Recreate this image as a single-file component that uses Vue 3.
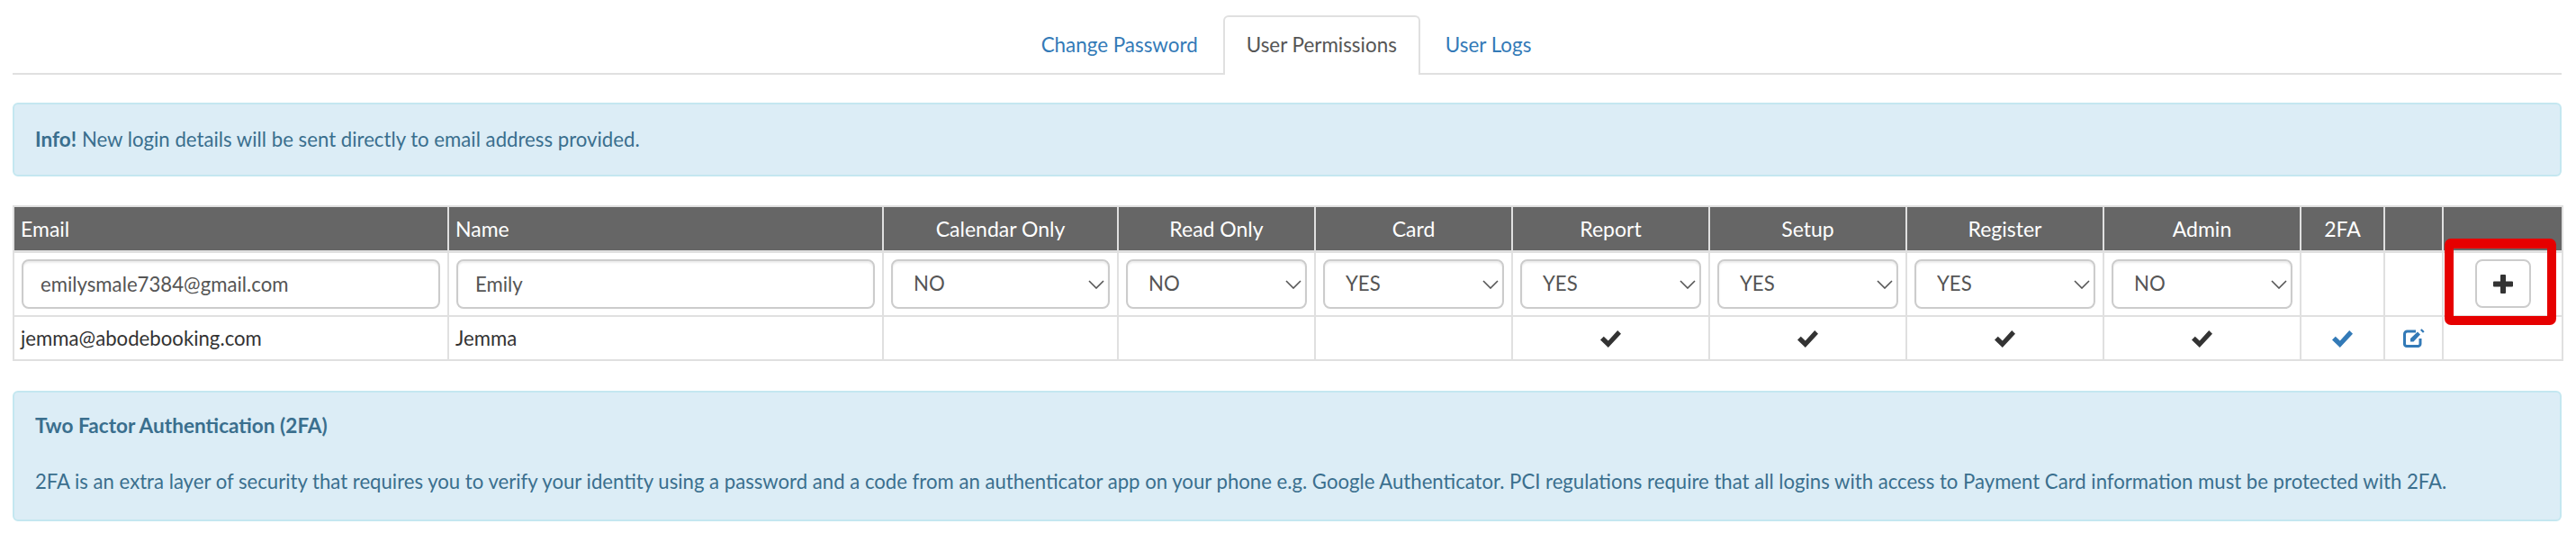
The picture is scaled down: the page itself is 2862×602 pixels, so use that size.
<script setup>
const columns = [
  { label: 'Email', cls: 'left', width: 483 },
  { label: 'Name', cls: 'left', width: 483 },
  { label: 'Calendar Only', width: 261 },
  { label: 'Read Only', width: 219 },
  { label: 'Card', width: 219 },
  { label: 'Report', width: 219 },
  { label: 'Setup', width: 219 },
  { label: 'Register', width: 219 },
  { label: 'Admin', width: 219 },
  { label: '2FA', width: 93 },
  { label: '', width: 65 },
  { label: '', width: 133 },
]
const selects = ['NO', 'NO', 'YES', 'YES', 'YES', 'YES', 'NO']
const checked = [false, false, false, true, true, true, true]
</script>

<template>
  <div class="page">
    <ul class="tabs">
      <li><a class="tab">Change Password</a></li>
      <li><a class="tab active">User Permissions</a></li>
      <li><a class="tab">User Logs</a></li>
    </ul>

    <div class="alert first"><strong>Info!</strong> New login details will be sent directly to email address provided.</div>

    <table class="grid">
      <colgroup>
        <col v-for="(c, i) in columns" :key="i" :style="{ width: c.width + 'px' }" />
      </colgroup>
      <thead>
        <tr>
          <th v-for="(c, i) in columns" :key="i" :class="c.cls">{{ c.label }}</th>
        </tr>
      </thead>
      <tbody>
        <tr class="form-row">
          <td><input class="field" value="emilysmale7384@gmail.com" /></td>
          <td><input class="field" value="Emily" /></td>
          <td v-for="(s, i) in selects" :key="i">
            <div class="select-wrap">
              <select class="field select">
                <option>{{ s }}</option>
              </select>
              <svg class="chevron" viewBox="0 0 18 10" width="18" height="10"><path d="M1 1l8 8 8-8" fill="none" stroke="#555" stroke-width="1.6" /></svg>
            </div>
          </td>
          <td></td>
          <td></td>
          <td class="add-cell">
            <button class="add" type="button">
              <svg viewBox="0 0 22 21" width="22" height="21"><path d="M8 1a1 1 0 0 1 1-1h4a1 1 0 0 1 1 1v6.500h7a1 1 0 0 1 1 1v4a1 1 0 0 1-1 1h-7V20a1 1 0 0 1-1 1H9a1 1 0 0 1-1-1v-6.500H1a1 1 0 0 1-1-1v-4a1 1 0 0 1 1-1h7z" fill="#333" /></svg>
            </button>
            <div class="highlight"></div>
          </td>
        </tr>
        <tr class="data-row">
          <td class="text-cell">jemma@abodebooking.com</td>
          <td class="text-cell">Jemma</td>
          <td v-for="(c, i) in checked" :key="i" class="center">
            <svg v-if="c" class="check" viewBox="0 0 23 19" width="23" height="19"><path d="M0 10.500l3.800-3.700 5 4.700L19.200 0 23 3.800 8.800 19z" fill="#333" /></svg>
          </td>
          <td class="center">
            <svg class="check" viewBox="0 0 23 19" width="23" height="19"><path d="M0 10.500l3.800-3.700 5 4.700L19.200 0 23 3.800 8.800 19z" fill="#337ab7" /></svg>
          </td>
          <td class="center">
            <svg class="edit" viewBox="0 0 24 21" width="24" height="21">
              <path d="M14 3H4.500A3 3 0 0 0 1.500 6v11.500a2.500 2.500 0 0 0 2.500 2h12a2.500 2.500 0 0 0 3-2.500V11" fill="none" stroke="#337ab7" stroke-width="3" />
              <path d="M8 14.500v-3.500l8-7.500 3 3-7.500 8zM19 1.800l1.600-1.600 3 3-1.600 1.600z" fill="#337ab7" />
            </svg>
          </td>
          <td></td>
        </tr>
      </tbody>
    </table>

    <div class="alert second">
      <p class="heading"><strong>Two Factor Authentication (2FA)</strong></p>
      <p>2FA is an extra layer of security that requires you to verify your identity using a password and a code from an authenticator app on your phone e.g. Google Authenticator. PCI regulations require that all logins with access to Payment Card information must be protected with 2FA.</p>
    </div>
  </div>
</template>

<style>
html, body { margin: 0; background: #fff; }
</style>

<style scoped>
.page {
  box-sizing: border-box;
  width: 2862px;
  height: 602px;
  padding: 17px 16px 0 14px;
  font-family: Lato, "Liberation Sans", sans-serif;
  font-size: 22.2px;
  line-height: 30px;
  color: #333;
  overflow: hidden;
}
.tabs {
  display: flex;
  justify-content: center;
  gap: 2px;
  list-style: none;
  margin: 0;
  padding: 0 2px 0 0;
  height: 64px;
  border-bottom: 2px solid #e0e0e0;
  box-sizing: content-box;
}
.tab {
  display: block;
  box-sizing: border-box;
  height: 66px;
  padding: 16px 24px;
  color: #337ab7;
  font-size: 22.4px;
  border: 2px solid transparent;
  border-bottom: 0;
  border-radius: 6px 6px 0 0;
}
.tab.active {
  color: #555;
  background: #fff;
  border-color: #e0e0e0;
}
.alert {
  box-sizing: border-box;
  background: #dcedf6;
  border: 2px solid #c4e7f0;
  border-radius: 6px;
  color: #3a6f8e;
  padding: 24px 24px 24px 23px;
}
.alert strong {
  font-size: 22.6px;
}
.first {
  height: 82px;
  margin-top: 31px;
}
.second {
  height: 145px;
  margin-top: 33px;
  padding-top: 22px;
}
.second p {
  margin: 0;
  font-size: 22.15px;
}
.second .heading {
  margin-bottom: 32px;
}
.grid {
  table-layout: fixed;
  border-collapse: collapse;
  width: 2832px;
  margin-top: 32px;
}
.grid th {
  height: 50px;
  padding: 0 7px;
  box-sizing: border-box;
  background: #666;
  color: #fff;
  font-size: 23px;
  font-weight: 400;
  text-align: center;
  border: 2px solid #e0e0e0;
  border-bottom: 3px solid #e0e0e0;
}
.grid th.left {
  text-align: left;
}
.grid td {
  padding: 0 8px;
  border: 2px solid #e0e0e0;
  box-sizing: border-box;
  vertical-align: middle;
  color: #333;
}
.grid td.text-cell {
  padding-left: 7px;
}
.form-row td {
  height: 72px;
}
.data-row td {
  height: 49px;
}
.center {
  text-align: center;
}
.field {
  display: block;
  box-sizing: border-box;
  width: 100%;
  height: 55px;
  padding: 0 19px;
  font: inherit;
  color: #555;
  background: #fff;
  border: 2px solid #ccc;
  border-radius: 8px;
  box-shadow: inset 0 2px 2px rgba(0, 0, 0, 0.075);
  outline: none;
}
.select {
  appearance: none;
  padding-left: 23px;
}
.select-wrap {
  position: relative;
}
.chevron {
  position: absolute;
  right: 6px;
  top: 23px;
  pointer-events: none;
}
.check {
  display: inline-block;
  vertical-align: middle;
  margin-bottom: 2px;
}
.edit {
  display: inline-block;
  vertical-align: middle;
  margin-bottom: 4px;
}
.add-cell {
  position: relative;
  text-align: center;
}
.add {
  display: inline-flex;
  align-items: center;
  justify-content: center;
  box-sizing: border-box;
  width: 62px;
  height: 54px;
  padding: 0;
  background: #fff;
  border: 2px solid #ccc;
  border-radius: 8px;
  vertical-align: middle;
}
.highlight {
  position: absolute;
  left: 1px;
  top: -16px;
  width: 124px;
  height: 96px;
  box-sizing: border-box;
  border: 10px solid #e60000;
  border-top-width: 11px;
  border-radius: 7px;
  pointer-events: none;
}
</style>
